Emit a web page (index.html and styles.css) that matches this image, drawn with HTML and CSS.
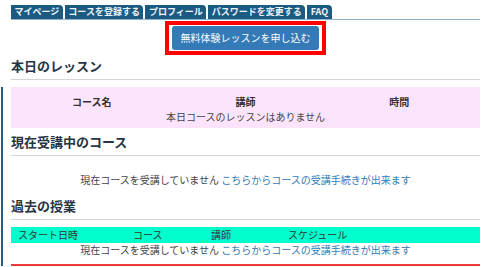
FILE: index.html
```html
<!DOCTYPE html>
<html lang="ja">
<head>
  <meta charset="UTF-8">
  <title>マイページ</title>
  <link rel="stylesheet" href="styles.css">
</head>
<body>

  <nav class="tabs">
    <a href="#" class="tab">マイページ</a>
    <a href="#" class="tab">コースを登録する</a>
    <a href="#" class="tab">プロフィール</a>
    <a href="#" class="tab">パスワードを変更する</a>
    <a href="#" class="tab">FAQ</a>
  </nav>

  <div class="wrap">
    <div class="trial">
      <div class="trial-frame">
        <a href="#" class="trial-btn">無料体験レッスンを申し込む</a>
      </div>
    </div>

    <h2 class="sec-title first">本日のレッスン</h2>

    <div class="rest">
      <!-- 本日のレッスン -->
      <div class="today-box">
        <table class="today-table">
          <tr>
            <th>コース名</th>
            <th>講師</th>
            <th>時間</th>
          </tr>
          <tr>
            <td colspan="3">本日コースのレッスンはありません</td>
          </tr>
        </table>
      </div>

      <!-- 現在受講中のコース -->
      <h2 class="sec-title">現在受講中のコース</h2>
      <p class="note">現在コースを受講していません <a href="#">こちらからコースの受講手続きが出来ます</a></p>

      <!-- 過去の授業 -->
      <h2 class="sec-title past">過去の授業</h2>
      <table class="past-table">
        <tr class="past-head">
          <th class="c1">スタート日時</th>
          <th class="c2">コース</th>
          <th class="c3">講師</th>
          <th>スケジュール</th>
        </tr>
        <tr>
          <td colspan="4">現在コースを受講していません <a href="#">こちらからコースの受講手続きが出来ます</a></td>
        </tr>
      </table>
    </div>
  </div>

</body>
</html>
```

FILE: styles.css
```css
body {
  font-family: "Noto Sans CJK JP", "Noto Sans", sans-serif;
  font-size: 10px;
  color: #444;
  background: #fff;
  margin: 0;
}

a {
  color: #337ab7;
  text-decoration: none;
}

.tabs {
  display: flex;
  gap: 2px;
  margin: 0 20px 0 11px;
  padding-top: 5px;
  border-bottom: 1px solid #8db3cf;
}

.tab {
  background: #1b5b82;
  color: #eef3f7;
  font-size: 9px;
  font-weight: bold;
  line-height: 14px;
  padding: 0 3.5px;
  border-top-right-radius: 4px;
}

.wrap {
  padding: 0 20px 0 11px;
}

.trial {
  display: flex;
  justify-content: center;
  margin-top: 1px;
}

.trial-frame {
  border: 4px solid #ff0000;
  padding: 1px 3px;
}

.trial-btn {
  display: block;
  width: 147px;
  line-height: 24px;
  text-align: center;
  background: #337ab7;
  color: #fff;
  border-radius: 3px;
  font-size: 10px;
}

.sec-title {
  font-size: 13px;
  font-weight: bold;
  line-height: 18px;
  color: #263445;
  margin: 3px 0 0;
  padding: 2px 0 4px;
  border-bottom: 1px solid #d4d4d4;
}

.sec-title.first {
  margin-top: 0;
}

.sec-title.past {
  margin-top: 8px;
}

.rest {
  margin-left: -10px;
  padding-left: 8px;
  border-left: 2px solid #1f5e8a;
}

/* 本日のレッスン */
.today-box {
  margin-top: 7px;
  background: #fde4fd;
  padding: 7px 4px 4px;
}

.today-table {
  width: 100%;
  border-collapse: collapse;
  table-layout: fixed;
}

.today-table th,
.today-table td {
  padding: 0;
  line-height: 15px;
  text-align: center;
  font-size: 10px;
}

.today-table th {
  color: #333;
  font-weight: bold;
}

.note {
  margin: 16px 0 0;
  line-height: 15px;
  text-align: center;
}

/* 過去の授業 */
.past-table {
  width: 100%;
  margin-top: 7px;
  border-collapse: collapse;
  border-bottom: 2px solid #f03a3a;
}

.past-table th,
.past-table td {
  padding: 0;
  font-size: 10px;
  font-weight: normal;
}

.past-head {
  background: #00ffcc;
}

.past-head th {
  text-align: left;
  line-height: 16px;
  color: #333;
  padding-left: 7px;
}

.past-head .c1 { width: 108px; }
.past-head .c2 { width: 71px; }
.past-head .c3 { width: 70px; }

.past-table td {
  text-align: center;
  line-height: 14px;
  padding-bottom: 7px;
}
```
